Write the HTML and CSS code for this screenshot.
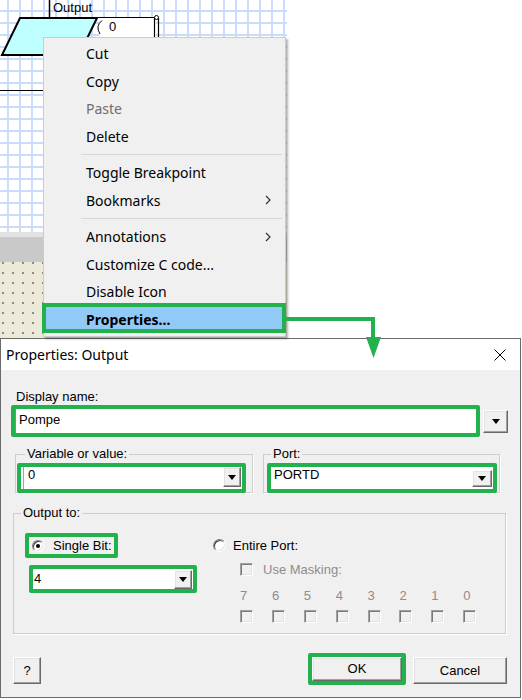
FILE: index.html
```html
<!DOCTYPE html>
<html>
<head>
<meta charset="utf-8">
<title>Properties: Output</title>
<link rel="stylesheet" href="styles.css">
</head>
<body>
<div class="page">
  <div class="top">
    <div class="canvas">
      <div class="grid">
        <svg class="chart" width="170" height="100" viewBox="0 0 170 100">
          <line x1="49.5" y1="0" x2="49.5" y2="18" stroke="#000" stroke-width="1.5"/>
          <path d="M99 17.5 H156 V40 H100 Z" fill="#fff"/>
          <path d="M97 17.5 H155" stroke="#000" stroke-width="1.2" fill="none"/>
          <path d="M102 20.5 Q95 26 100 34" stroke="#000" stroke-width="1" fill="none"/>
          <line x1="154.5" y1="18" x2="154.5" y2="40" stroke="#000" stroke-width="1.2"/>
          <line x1="158.5" y1="18" x2="158.5" y2="40" stroke="#000" stroke-width="1.2"/>
          <circle cx="156.5" cy="17.5" r="2" fill="#fff" stroke="#000" stroke-width="1"/>
          <polygon points="20,18 97,18 79,55 2,55" fill="#c0ffff" stroke="#000" stroke-width="2"/>
          <line x1="0" y1="90.5" x2="45" y2="90.5" stroke="#000" stroke-width="1"/>
        </svg>
        <span class="chart-label">Output</span>
        <span class="chart-value">0</span>
      </div>
      <div class="hscroll"></div>
      <div class="dots"></div>
    </div>
    <div class="blank"></div>

    <div class="menu">
      <div class="item">Cut</div>
      <div class="item">Copy</div>
      <div class="item disabled">Paste</div>
      <div class="item">Delete</div>
      <div class="sep"></div>
      <div class="item">Toggle Breakpoint</div>
      <div class="item">Bookmarks<svg class="chev" width="6" height="10" viewBox="0 0 6 10"><path d="M1 1 L5 5 L1 9" fill="none" stroke="#333" stroke-width="1.2"/></svg></div>
      <div class="sep"></div>
      <div class="item">Annotations<svg class="chev" width="6" height="10" viewBox="0 0 6 10"><path d="M1 1 L5 5 L1 9" fill="none" stroke="#333" stroke-width="1.2"/></svg></div>
      <div class="item">Customize C code...</div>
      <div class="item">Disable Icon</div>
      <div class="item active">Properties...</div>
    </div>
  </div>

  <div class="dialog">
    <div class="titlebar">
      <span class="title">Properties: Output</span>
      <svg class="close" width="12" height="12" viewBox="0 0 12 12"><path d="M0.5 0.5 L11.5 11.5 M11.5 0.5 L0.5 11.5" stroke="#000" stroke-width="1"/></svg>
    </div>
    <div class="dbody">
      <div class="lbl">Display name:</div>
      <div class="name-row">
        <div class="hl name-box"><div class="edit">Pompe</div></div>
        <div class="btn3d dd-big"><span class="tri"></span></div>
      </div>

      <div class="groups">
        <fieldset class="grp var">
          <legend>Variable or value:</legend>
          <div class="hl var-box">
            <div class="combo">
              <span class="val val-var">0</span>
              <span class="btn3d dd dd-var"><span class="tri"></span></span>
            </div>
          </div>
        </fieldset>
        <fieldset class="grp port">
          <legend>Port:</legend>
          <div class="hl port-box">
            <div class="combo">
              <span class="val val-port">PORTD</span>
              <span class="btn3d dd dd-port"><span class="tri"></span></span>
            </div>
          </div>
        </fieldset>
      </div>

      <fieldset class="grp out">
        <legend>Output to:</legend>
        <div class="out-cols">
          <div class="col-left">
            <div class="hl bit-box"><span class="radio on"></span><span>Single Bit:</span></div>
            <div class="hl four-box">
              <div class="combo">
                <span class="val val-four">4</span>
                <span class="btn3d dd dd-four"><span class="tri"></span></span>
              </div>
            </div>
          </div>
          <div class="col-right">
            <div class="opt"><span class="radio"></span><span>Entire Port:</span></div>
            <div class="mask">
              <div class="mask-row"><span class="check"></span><span class="dis">Use Masking:</span></div>
              <div class="bits">
                <div class="bit"><span class="dis">7</span><span class="check"></span></div>
                <div class="bit"><span class="dis">6</span><span class="check"></span></div>
                <div class="bit"><span class="dis">5</span><span class="check"></span></div>
                <div class="bit"><span class="dis">4</span><span class="check"></span></div>
                <div class="bit"><span class="dis">3</span><span class="check"></span></div>
                <div class="bit"><span class="dis">2</span><span class="check"></span></div>
                <div class="bit"><span class="dis">1</span><span class="check"></span></div>
                <div class="bit"><span class="dis">0</span><span class="check"></span></div>
              </div>
            </div>
          </div>
        </div>
      </fieldset>

      <div class="buttons">
        <div class="btn3d push help">?</div>
        <div class="hl ok-box"><div class="btn3d push ok">OK</div></div>
        <div class="btn3d push cancel">Cancel</div>
      </div>
    </div>
  </div>

  <svg class="connector" width="100" height="46" viewBox="0 0 100 46">
    <rect x="0" y="2" width="89" height="4" fill="#22b14c"/>
    <rect x="85" y="2" width="4" height="24" fill="#22b14c"/>
    <polygon points="80,22 95,22 87.5,43" fill="#22b14c"/>
  </svg>
</div>
</body>
</html>
```

FILE: styles.css
```css
* { box-sizing: border-box; }

body {
  margin: 0;
  width: 522px;
  height: 700px;
  overflow: hidden;
  background: #fff;
  font-family: "Liberation Sans", Arial, sans-serif;
  font-size: 13px;
  color: #000;
}

.page {
  position: relative;
  width: 522px;
  height: 700px;
}

/* ---------- background editor ---------- */
.top {
  position: relative;
  display: flex;
  height: 338px;
}

.canvas {
  width: 287px;
  display: flex;
  flex-direction: column;
}

.grid {
  position: relative;
  height: 232px;
  background-color: #fff;
  background-image:
    linear-gradient(90deg, #cadcfa 2px, transparent 2px),
    linear-gradient(180deg, #cadcfa 2px, transparent 2px);
  background-size: 12px 12px;
  background-position: 7px 10px;
}

.chart {
  position: absolute;
  left: 0;
  top: 0;
}

.chart-label,
.chart-value {
  position: absolute;
  font-size: 13px;
  line-height: 15px;
}
.chart-label { left: 53px; top: 0; }
.chart-value { left: 109px; top: 19px; }

.hscroll {
  height: 30px;
  background: #c9c9c9;
  border-top: 5px solid #e2e2e2;
}

.dots {
  flex: 1;
  background-color: #ece9d8;
  background-image: radial-gradient(circle, #8a8a8a 0.9px, transparent 1.3px);
  background-size: 10px 10px;
  background-position: -2px -4px;
}

.blank {
  flex: 1;
  background: #fff;
}

/* ---------- context menu ---------- */
.menu {
  position: absolute;
  left: 43px;
  top: 37px;
  width: 243px;
  height: 300px;
  padding-top: 2px;
  background: #f0f0f0;
  border: 1px solid #cccccc;
  box-shadow: 2px 2px 2px rgba(0, 0, 0, 0.3);
  font-family: "Noto Sans", "Open Sans", sans-serif;
  font-size: 14px;
  color: #000;
}

.item {
  display: flex;
  align-items: center;
  justify-content: space-between;
  height: 27.5px;
  padding: 0 14px 0 42px;
  white-space: nowrap;
}

.item.disabled { color: #6d6d6d; }

.item.active {
  height: 30px;
  margin: -2.5px -1px 0 -2px;
  padding: 2px 14px 0 44px;
  background: #91c9f7;
  box-shadow: inset 0 0 0 4px #22b14c;
  font-weight: bold;
}

.sep {
  height: 1px;
  margin: 4px 3px 4px 37px;
  background: #d7d7d7;
}

/* ---------- dialog ---------- */
.dialog {
  width: 521px;
  border: 1px solid #6b6b6b;
  background: #f0f0f0;
}

.titlebar {
  display: flex;
  align-items: center;
  justify-content: space-between;
  height: 31px;
  padding: 0 14px 0 5px;
  background: #fff;
  font-family: "Noto Sans", "Open Sans", sans-serif;
  font-size: 14px;
}

.close { display: block; }

.dbody {
  padding: 19px 0 12px 0;
}

.lbl {
  margin-left: 15px;
  line-height: 16px;
}

.hl {
  border: 4px solid #22b14c;
  border-radius: 2px;
}

.name-row {
  display: flex;
  align-items: center;
  gap: 3px;
  height: 32px;
  margin-left: 10px;
}

.name-box {
  width: 469px;
  height: 32px;
  background: #fff;
}

.edit {
  height: 100%;
  padding: 3px 0 0 3px;
  line-height: 16px;
  border-left: 1px solid #8a8a8a;
}

.btn3d {
  display: flex;
  align-items: center;
  justify-content: center;
  background: #f0f0f0;
  border: 1px solid;
  border-color: #fff #696969 #696969 #fff;
  box-shadow: inset -1px -1px 0 #a0a0a0, inset 1px 1px 0 #e3e3e3;
}

.tri {
  width: 0;
  height: 0;
  border-left: 4.5px solid transparent;
  border-right: 4.5px solid transparent;
  border-top: 5px solid #000;
}

.dd-big {
  width: 25px;
  height: 23px;
}

.groups {
  display: flex;
  gap: 10px;
  margin: 9px 0 0 14px;
}

fieldset.grp {
  margin: 0;
  padding: 0;
  min-width: 0;
  border: 1px solid #cdcdcd;
  box-shadow: 1px 1px 0 #fff;
}

fieldset.grp legend {
  padding: 0 2px;
  line-height: 16px;
}

fieldset.var { width: 238px; }
fieldset.var legend { margin-left: 9px; }
fieldset.port { width: 237px; }
fieldset.port legend { margin-left: 7px; }

.var-box {
  width: 229px;
  height: 30px;
  margin: 1px 0 -1px 1px;
}

.port-box {
  width: 230px;
  height: 30px;
  margin: 1px 0 -1px 3px;
}

.combo {
  display: flex;
  height: 100%;
  background: #fff;
}

.val {
  flex: 1;
  line-height: 16px;
}

.val-var {
  margin-left: 2px;
  padding-left: 4px;
  border-left: 1px solid #a0a0a0;
}

.val-port { padding-left: 3px; }

.val-four {
  align-self: center;
  padding-left: 1px;
}

.dd { flex: none; }

.dd-var {
  width: 18px;
  height: 20px;
  margin-right: 1px;
}

.dd-port {
  width: 20px;
  height: 17px;
  margin: 3px 1px 0 0;
}

.dd-four {
  width: 18px;
  height: 19px;
  margin: 0 1px 0 0;
  align-self: center;
}

/* output group */
fieldset.out {
  width: 493px;
  margin: 12px 0 0 12px;
  padding: 0 0 10px 0;
}
fieldset.out legend { margin-left: 7px; }

.out-cols { display: flex; }

.col-left {
  display: flex;
  flex-direction: column;
  align-items: flex-start;
  width: 188px;
  margin-left: 11px;
}

.bit-box {
  display: flex;
  align-items: center;
  gap: 9px;
  width: 93px;
  height: 25px;
  margin-top: 12px;
  padding-left: 3px;
}

.four-box {
  width: 168px;
  height: 28px;
  margin: 7px 0 0 4px;
}

.col-right {
  display: flex;
  flex-direction: column;
}

.opt {
  display: flex;
  align-items: center;
  gap: 7px;
  height: 25px;
  margin-top: 12px;
}

.radio {
  position: relative;
  flex: none;
  width: 13px;
  height: 13px;
  border-radius: 50%;
  background: #fff;
  border: 1px solid;
  border-color: #808080 #fff #fff #808080;
  box-shadow: inset 1px 1px 0 #404040, inset -1px -1px 0 #e3e3e3;
}

.bit-box .radio {
  width: 12px;
  height: 12px;
}

.radio.on::after {
  content: "";
  position: absolute;
  left: 50%;
  top: 50%;
  width: 4px;
  height: 4px;
  margin: -2px 0 0 -2px;
  border-radius: 50%;
  background: #000;
}

.mask { margin: 5px 0 0 27px; }

.mask-row {
  display: flex;
  align-items: center;
  gap: 10px;
  height: 13px;
}

.check {
  display: block;
  flex: none;
  width: 13px;
  height: 13px;
  background: #f0f0f0;
  border: 1px solid;
  border-color: #a0a0a0 #fff #fff #a0a0a0;
  box-shadow: inset 1px 1px 0 #7a7a7a, inset -1px -1px 0 #e3e3e3;
}

.dis { color: #8d8d8d; }

.bits {
  display: grid;
  grid-template-columns: repeat(8, 31.9px);
  margin-top: 12px;
}

.bit {
  display: flex;
  flex-direction: column;
  align-items: flex-start;
  line-height: 16px;
}

.bit .check { margin-top: 6px; }

/* buttons */
.buttons {
  display: flex;
  align-items: flex-start;
  margin: 19px 13px 0 12px;
}

.push { line-height: 16px; }

.help {
  width: 28px;
  height: 27px;
  margin-top: 4px;
}

.ok-box {
  width: 98px;
  height: 32px;
  margin-left: auto;
}

.ok {
  width: 100%;
  height: 100%;
}

.cancel {
  width: 94px;
  height: 27px;
  margin: 4px 0 0 7px;
}

/* annotation arrow */
.connector {
  position: absolute;
  left: 286px;
  top: 315px;
  z-index: 5;
}
```
